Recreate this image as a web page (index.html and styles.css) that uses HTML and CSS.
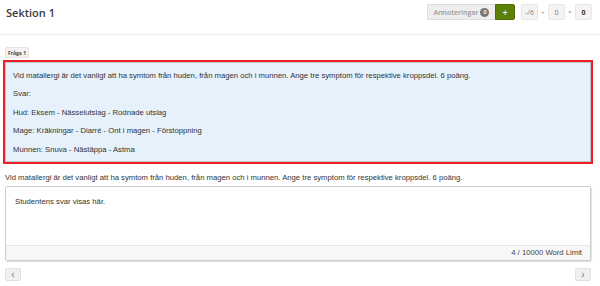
FILE: index.html
```html
<!DOCTYPE html>
<html lang="sv">
<head>
<meta charset="UTF-8">
<meta name="viewport" content="width=device-width, initial-scale=1.0">
<title>Sektion 1</title>
<link rel="stylesheet" href="styles.css">
</head>
<body>

<header class="section-head">
  <h1 class="section-title">Sektion 1</h1>
  <div class="head-tools">
    <div class="btn-group">
      <button class="btn-notes">Annoteringar <span class="badge">0</span></button>
      <button class="btn-add">+</button>
    </div>
    <div class="score">
      <span class="score-box">-/6</span>
      <span class="score-op">+</span>
      <span class="score-box">0</span>
      <span class="score-op">=</span>
      <span class="score-box total">0</span>
    </div>
  </div>
</header>

<div class="question">
  <span class="q-tag">Fråga 1</span>

  <div class="q-panel">
    <p>Vid matallergi är det vanligt att ha symtom från huden, från magen och i munnen. Ange tre symptom för respektive kroppsdel. 6 poäng.</p>
    <p>Svar:</p>
    <p>Hud: Eksem - Nässelutslag - Rodnade utslag</p>
    <p>Mage: Kräkningar - Diarré - Ont i magen - Förstoppning</p>
    <p>Munnen: Snuva - Nästäppa - Astma</p>
  </div>

  <p class="q-text">Vid matallergi är det vanligt att ha symtom från huden, från magen och i munnen. Ange tre symptom för respektive kroppsdel. 6 poäng.</p>

  <div class="answer">
    <div class="answer-body">Studentens svar visas här.</div>
    <div class="answer-foot">4 / 10000 Word Limit</div>
  </div>

  <div class="nav">
    <button class="nav-btn">&lsaquo;</button>
    <button class="nav-btn">&rsaquo;</button>
  </div>
</div>

</body>
</html>
```

FILE: styles.css
```css
body {
  margin: 0;
  font-family: 'Liberation Sans', Arial, sans-serif;
  font-size: 7.7px;
  color: #333;
  background-color: #fff;
}
.section-head {
  display: flex;
  justify-content: space-between;
  align-items: flex-start;
  height: 34px;
  border-bottom: 1px solid #eee;
  padding: 0 8px 0 6px;
}
.section-title {
  margin: 0;
  padding-top: 4px;
  font-family: 'Open Sans', sans-serif;
  font-weight: 600;
  font-size: 11px;
  line-height: 18px;
  color: #3a3a3a;
}
.head-tools {
  display: flex;
  align-items: center;
  gap: 6px;
  margin-top: 4px;
}
.btn-group {
  display: flex;
}
.btn-notes,
.btn-add {
  height: 16px;
  font-family: 'Open Sans', sans-serif;
  font-weight: 600;
  font-size: 7px;
  padding: 0;
  display: flex;
  align-items: center;
  justify-content: center;
  white-space: nowrap;
}
.btn-notes {
  width: 68px;
  background-color: #eee;
  border: 1px solid #ddd;
  border-right: none;
  border-radius: 2px 0 0 2px;
  color: #999;
  gap: 2px;
}
.badge {
  display: inline-block;
  width: 9px;
  height: 9px;
  line-height: 9px;
  border-radius: 50%;
  background-color: #777;
  color: #fff;
  font-size: 6px;
  text-align: center;
}
.btn-add {
  width: 20px;
  background-color: #5b7f07;
  border: 1px solid #4d6c05;
  border-radius: 0 2px 2px 0;
  color: #fff;
  font-size: 9px;
}
.score {
  display: flex;
  align-items: center;
  gap: 2px;
}
.score-box {
  display: flex;
  align-items: center;
  justify-content: center;
  min-width: 17px;
  height: 16px;
  box-sizing: border-box;
  padding: 0 2px;
  background-color: #f4f4f4;
  border: 1px solid #e6e6e6;
  border-radius: 2px;
  font-family: 'Open Sans', sans-serif;
  font-size: 7px;
  color: #777;
}
.score-op {
  font-size: 6px;
  color: #999;
  width: 6px;
  text-align: center;
}
.score-box.total {
  color: #333;
  font-weight: 700;
}
.question {
  padding: 0 9px 0 5px;
}
.q-tag {
  display: inline-block;
  margin-top: 12px;
  height: 11px;
  line-height: 11px;
  padding: 0 2px;
  background-color: #f3f3f3;
  border: 1px solid #e2e2e2;
  border-radius: 2px;
  box-sizing: border-box;
  font-family: 'Open Sans', sans-serif;
  font-weight: 700;
  font-size: 5px;
  color: #444;
  vertical-align: top;
}
.q-panel {
  margin-top: 4px;
  padding: 6.5px 7px;
  background-color: #e6f1fb;
  border: 1px solid #bfc9d2;
  outline: 2px solid #ee1c24;
}
.q-panel p {
  margin: 0 0 7.5px;
  line-height: 11px;
}
.q-panel p:last-child {
  margin-bottom: 0;
}
.q-text {
  margin: 9.5px 0 3.5px;
  line-height: 11px;
}
.answer {
  border: 1px solid #ccc;
  border-radius: 2px;
  box-shadow: 1px 1px 1px rgba(0,0,0,0.12);
}
.answer-body {
  height: 58px;
  box-sizing: border-box;
  padding: 8.5px 9px;
  line-height: 11px;
}
.answer-foot {
  height: 14px;
  line-height: 14px;
  background-color: #f7f7f7;
  border-top: 1px solid #e6e6e6;
  text-align: right;
  padding-right: 8px;
  color: #444;
}
.nav {
  display: flex;
  justify-content: space-between;
  margin-top: 7px;
}
.nav-btn {
  width: 16px;
  height: 13px;
  padding: 0;
  background-color: #f0f0f0;
  border: 1px solid #e0e0e0;
  border-radius: 2px;
  color: #777;
  font-size: 10px;
  line-height: 10px;
}
```
